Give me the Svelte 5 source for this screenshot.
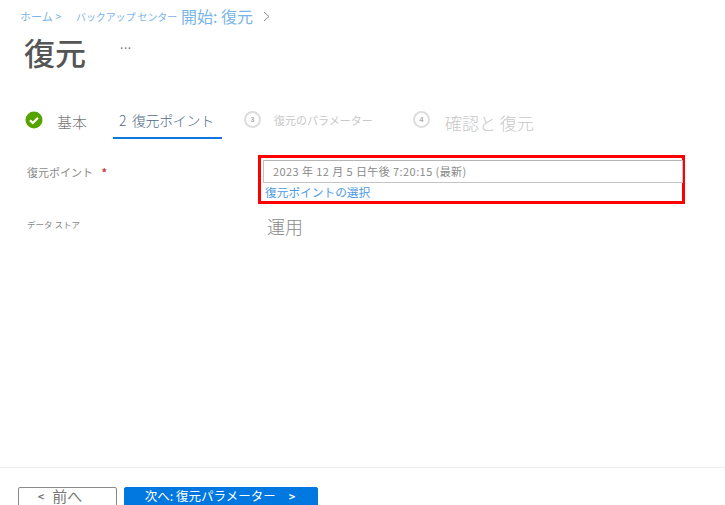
<script>
  const steps = [
    { n: 3, label: '復元のパラメーター', cls: 'small' },
    { n: 4, label: '確認と 復元', cls: 'large' }
  ];
</script>

<div class="page">
  <nav class="crumbs">
    <a href="#home" class="crumb-a">ホーム &gt;</a>
    <a href="#backup" class="crumb-b">バックアップ センター</a>
    <a href="#start" class="crumb-c">開始: 復元</a>
    <svg class="chev" width="7" height="11" viewBox="0 0 7 11"><path d="M1 1l5 4.5L1 10" fill="none" stroke="#8a8a8a" stroke-width="1" /></svg>
  </nav>

  <header class="title-row">
    <h1>復元</h1>
    <span class="more">...</span>
  </header>

  <div class="steps">
    <div class="step done">
      <svg width="18" height="18" viewBox="0 0 18 18">
        <circle cx="9" cy="9" r="8.5" fill="#57a300" />
        <path d="M5 9.2l2.8 2.8L13 6.8" fill="none" stroke="#fff" stroke-width="2.2" />
      </svg>
      <span class="lbl-base">基本</span>
    </div>
    <div class="step active"><span>2 復元ポイント</span></div>
    {#each steps as s}
      <div class="step todo {s.cls}">
        <span class="num">{s.n}</span>
        <span class="lbl">{s.label}</span>
      </div>
    {/each}
  </div>

  <section class="form">
    <div class="row first">
      <div class="label">復元ポイント <span class="req">*</span></div>
      <div class="highlight">
        <div class="input">2023 年 12 月 5 日午後 7:20:15 (最新)</div>
        <a href="#select" class="select-link">復元ポイントの選択</a>
      </div>
    </div>
    <div class="row second">
      <div class="label tiny">データ ストア</div>
      <div class="value">運用</div>
    </div>
  </section>

  <footer class="footer">
    <button class="btn prev"><span class="arrow">&lt;</span> 前へ</button>
    <button class="btn next">次へ: 復元パラメーター <span class="arrow gt">&gt;</span></button>
  </footer>
</div>

<style>
  :global(body) {
    margin: 0;
    background: #fff;
  }

  .page {
    width: 725px;
    height: 505px;
    overflow: hidden;
    display: flex;
    flex-direction: column;
    font-family: "Noto Sans CJK JP", "Noto Sans", sans-serif;
    color: #6b6b6b;
  }

  a {
    text-decoration: none;
  }

  .crumbs {
    display: flex;
    align-items: center;
    height: 20px;
    margin-top: 6px;
    padding-left: 20px;
    color: #7ab5e8;
    white-space: nowrap;
  }

  .crumbs a {
    color: #7ab5e8;
  }

  .crumb-a {
    font-size: 11px;
    width: 56px;
  }

  .crumb-b {
    font-size: 10px;
    letter-spacing: -0.1px;
    width: 105px;
  }

  .crumb-c {
    font-size: 16px;
    width: 82px;
  }

  .chev {
    margin-top: 1px;
  }

  .title-row {
    display: flex;
    align-items: flex-start;
    height: 54px;
    padding-left: 24px;
  }

  h1 {
    margin: -1px 0 0;
    font-size: 31px;
    font-weight: 500;
    line-height: 54px;
    color: #555;
    width: 96px;
  }

  .more {
    font-size: 12px;
    letter-spacing: 0.6px;
    line-height: 14px;
    margin-top: 11px;
    color: #777;
  }

  .steps {
    display: flex;
    align-items: center;
    height: 39px;
    margin-top: 20px;
    padding-left: 25px;
    white-space: nowrap;
  }

  .step {
    display: flex;
    align-items: center;
  }

  .done {
    gap: 14px;
    font-size: 15px;
    font-weight: 300;
    color: #777;
    width: 88px;
  }

  .lbl-base {
    margin-top: 3px;
  }

  .active {
    box-sizing: border-box;
    width: 109px;
    height: 39px;
    padding: 2px 0 0 6px;
    font-size: 14px;
    font-weight: 300;
    letter-spacing: -0.35px;
    word-spacing: 3px;
    color: #4f6a88;
    border-bottom: 2px solid #0f78e0;
  }

  .todo {
    color: #c8c8c8;
    gap: 13px;
  }

  .small {
    font-size: 11px;
    margin-left: 22px;
    width: 169px;
  }

  .large {
    font-size: 17px;
    font-weight: 300;
    gap: 15px;
  }

  .large .lbl {
    margin-top: 5px;
  }

  .small .lbl {
    margin-top: 1px;
  }

  .num {
    box-sizing: border-box;
    width: 17px;
    height: 17px;
    border: 2px solid #ddd;
    border-radius: 50%;
    font: 700 7px/13px "Liberation Sans", sans-serif;
    text-align: center;
    color: #aaa;
  }

  .form {
    padding-left: 27px;
    flex: 1;
  }

  .row {
    display: flex;
  }

  .first {
    margin-top: 16px;
  }

  .second {
    margin-top: 7px;
    align-items: center;
  }

  .label {
    width: 231px;
    flex: none;
    font-size: 11px;
    color: #8a8a8a;
  }

  .first .label {
    padding-top: 8px;
    line-height: 18px;
  }

  .tiny {
    font-size: 8.5px;
    width: 240px;
    margin-top: -4px;
  }

  .req {
    color: #d13438;
    margin-left: 6px;
    font-weight: 700;
  }

  .highlight {
    box-sizing: border-box;
    width: 427px;
    height: 49px;
    border: 3px solid #f00;
    padding: 2px;
  }

  .input {
    box-sizing: border-box;
    width: 420px;
    height: 23px;
    border: 1px solid #c4c4c4;
    border-top-color: #b5b5b5;
    padding-left: 9px;
    font-size: 11px;
    letter-spacing: 0.42px;
    line-height: 20px;
    color: #8a8a8a;
  }

  .select-link {
    display: block;
    padding-left: 2px;
    font-size: 11.7px;
    line-height: 18px;
    color: #4a9ae2;
  }

  .value {
    font-size: 18px;
    font-weight: 300;
    line-height: 30px;
    color: #8a8a8a;
  }

  .footer {
    box-sizing: border-box;
    height: 38px;
    flex: none;
    border-top: 1px solid #eee;
    padding: 19px 0 0 18px;
    display: flex;
    gap: 7px;
    align-items: flex-start;
  }

  .btn {
    box-sizing: border-box;
    height: 22px;
    padding: 0;
    border-radius: 2px;
    font-family: inherit;
    font-size: 15px;
    line-height: 16px;
    white-space: nowrap;
    display: flex;
    justify-content: center;
    align-items: flex-start;
    gap: 8px;
  }

  .prev {
    width: 99px;
    background: #fff;
    border: 1px solid #8a8a8a;
    color: #777;
    padding-right: 15px;
  }

  .next {
    width: 194px;
    background: #0078e0;
    border: 1px solid #0078e0;
    color: #fff;
    gap: 13px;
    font-size: 12.5px;
    padding-right: 2px;
  }

  .arrow {
    font-size: 11px;
    font-weight: 700;
  }
</style>
